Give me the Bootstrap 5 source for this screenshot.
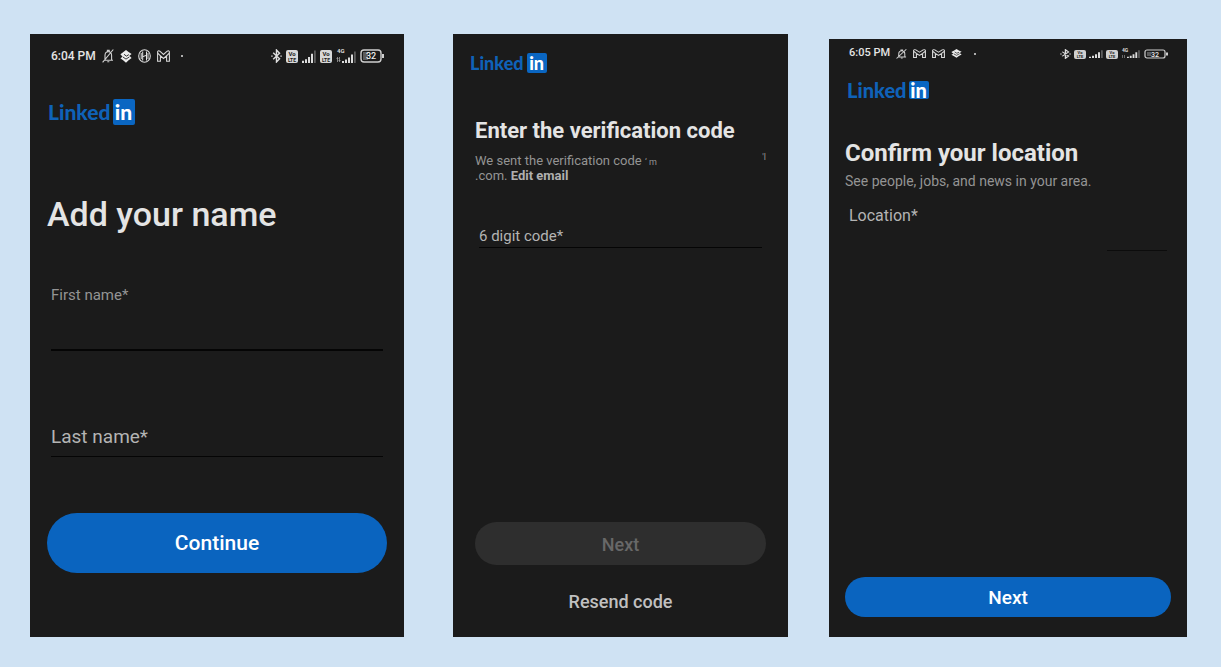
<!DOCTYPE html>
<html lang="en">
<head>
<meta charset="utf-8">
<meta name="viewport" content="width=device-width, initial-scale=1">
<title>LinkedIn sign up</title>
<link href="https://cdn.jsdelivr.net/npm/bootstrap@5.3.0/dist/css/bootstrap.min.css" rel="stylesheet">
<style>
body{background:#cfe2f3;font-family:Roboto,"Liberation Sans",sans-serif;color:#e4e4e4}
.board{min-height:100vh;padding:34px 34px 30px 30px;grid-template-columns:374fr 49px 335fr 41px 358fr}
.phone{background:#1b1b1b;min-width:0}
.phone-name{grid-column:1;padding:12px 17px 64px}
.phone-code{grid-column:3;padding:19px 22px 20px}
.phone-place{grid-column:5;padding:4px 16px 20px;margin-top:5px}
.status{height:20px;font-size:12px;font-weight:500;padding:0 2px 0 4px}
.status svg{flex:none;display:block}
.status-small{font-size:11px;height:21px}
.icons-left{gap:6px}
.icons-right{gap:4px}
.status-small .icons-right{gap:3px}
.logo{color:#0f62b8;font-family:Lato,"Open Sans",sans-serif;font-weight:900;gap:2px}
.logo-in{background:#0a66c2;color:#fff;border-radius:2px;text-align:center}
.logo-lg{font-size:21px;line-height:26px;margin:33px 0 0 1px}
.logo-lg .logo-in{width:22px}
.logo-md{font-size:18px;line-height:20px;margin-left:-5px;gap:3px}
.logo-md .logo-in{width:20px}
.logo-sm{font-size:20px;line-height:18px;margin:17px 0 0 2px}
.logo-sm .logo-in{width:20px}
h1,h2{margin:0}
h1{font-size:34px;line-height:44px;font-weight:500;margin-top:67px}
h2{font-size:22px;line-height:28px;font-weight:700}
.code-title{margin-top:44px}
.place-title{font-size:24px;margin-top:40px}
.field{padding:0 4px}
.line-input{display:block;width:100%;background:transparent;border:0;border-bottom:1px solid #050505;border-radius:0;padding:0;color:#b4b4b4;outline:0}
.line-input::placeholder{color:#b4b4b4;opacity:1}
.muted{color:#949494}
.pill{border:0;border-radius:50rem;width:100%;font-weight:500;color:#fff;padding:2px 0 0}
.pill-blue{background:#0a64bf}
.pill-off{background:#2e2e2e;color:#686868}
.pill-lg{height:60px;font-size:21px}
.pill-md{height:43px;font-size:18px}
.pill-sm{height:40px;font-size:19px}
.first-label{font-size:15px;line-height:20px;margin-top:49px}
.first-input{height:46px;border-bottom-width:2px}
.last-input{height:41px;margin-top:65px;font-size:19px}
.note{font-size:13px;line-height:15px;margin-top:8px}
.note a{color:#b0b0b0;font-weight:700;text-decoration:none}
.trace{font-size:9px;line-height:9px}
.code-input{height:24px;margin-top:41px;font-size:15px}
.resend{background:none;border:0;color:#c0c0c0;font-size:18px;line-height:30px;font-weight:500;margin-top:22px;padding:0}
.place-note{font-size:14px;line-height:16px;margin-top:6px}
.place-label{font-size:16px;line-height:20px;margin-top:17px;color:#b4b4b4}
.place-input{height:25px;border:0;background:linear-gradient(#0c0c0c,#0c0c0c) right bottom/60px 1px no-repeat}
</style>
</head>
<body>
<svg width="0" height="0" class="position-absolute" aria-hidden="true">
  <symbol id="bell" viewBox="0 0 12 14" preserveAspectRatio="none"><path d="M2 11.2h9M3 11V6.5C3 4 4.3 2.7 6.3 2.7S9.6 4 9.6 6.5V11M5.4 2.5V1.4h1.8v1.1M5.3 12.8h2M11.3.5.6 13.3" fill="none" stroke="#d0d0d0" stroke-width="1.1"/></symbol>
  <symbol id="stack" viewBox="0 0 12 14" preserveAspectRatio="none"><path d="M6 0 8.600 2.200 11.600 4.400 9.400 6.200 11.600 8.600 8.600 11 6 13.800 3.400 11.400.4 8.800 2.600 7.300.4 4.600 3.400 2.200z" fill="#ececec"/><path d="M4 4.600 6.400 6.600 8.800 5M3 7.600 6 9.800 9.400 7.400" fill="none" stroke="#1b1b1b" stroke-width=".9"/></symbol>
  <symbol id="hring" viewBox="0 0 13 14" preserveAspectRatio="none"><ellipse cx="6.5" cy="7" rx="5.8" ry="6.3" fill="none" stroke="#d8d8d8" stroke-width="1.1"/><path d="M4.7 2.5v9M8.5 2.5v9M4.7 7.7 8.5 6.3M3.2 4v6M10 4v6" fill="none" stroke="#e4e4e4" stroke-width="1"/></symbol>
  <symbol id="gmail" viewBox="0 0 13 12" preserveAspectRatio="none"><path d="M.6 11.3V1.8Q1.4.1 2.8 1.2L6.5 4.4 10.2 1.2Q11.6.1 12.4 1.8V11.3H9.6V5.8L6.5 8.5 3.4 5.8V11.3zM3.4 5.8.8 3.2M9.6 5.8 12.2 3.2" fill="none" stroke="#d8d8d8" stroke-width="1.1"/></symbol>
  <symbol id="bt" viewBox="0 0 10 14" preserveAspectRatio="none"><path d="M2 3.8 7.8 9.8 5 13V1L7.8 4.2 2 10.2" fill="none" stroke="#dedede" stroke-width="1.3"/><path d="M.2 6.4h1.3v1.3H.2zM8.5 6.4h1.3v1.3H8.5z" fill="#dedede"/></symbol>
  <symbol id="bars" viewBox="0 0 14 12" preserveAspectRatio="none"><path d="M0 10h2v2H0zM3 8.5h2V12H3zM6 6.5h2V12H6zM9 3.5h2V12H9z" fill="#dcdcdc"/><path d="M12 .5h1.8V12H12z" fill="#5c5c5c"/></symbol>
</svg>

<main class="board d-grid">

  <section class="phone phone-name d-flex flex-column">
    <div class="status d-flex align-items-center justify-content-between">
      <div class="icons-left d-flex align-items-center">
        <span>6:04 PM</span>
        <svg width="12" height="14"><use href="#bell"/></svg>
        <svg width="12" height="13"><use href="#stack"/></svg>
        <svg width="13" height="14"><use href="#hring"/></svg>
        <svg width="13" height="12"><use href="#gmail"/></svg>
        <svg width="12" height="4"><circle cx="6" cy="2" r="1" fill="#e0e0e0"/></svg>
      </div>
      <div class="icons-right d-flex align-items-center">
        <svg width="11" height="14"><use href="#bt"/></svg>
        <svg width="12" height="14"><rect y="1" width="12" height="13" rx="2" fill="#d8d8d8"/><text x="6" y="7" font-size="6" font-weight="700" text-anchor="middle" fill="#1b1b1b">Vo</text><text x="6" y="13" font-size="5" font-weight="700" text-anchor="middle" fill="#1b1b1b">LTE</text></svg>
        <svg width="14" height="13"><use href="#bars"/></svg>
        <svg width="12" height="14"><rect y="1" width="12" height="13" rx="2" fill="#d8d8d8"/><text x="6" y="7" font-size="6" font-weight="700" text-anchor="middle" fill="#1b1b1b">Vo</text><text x="6" y="13" font-size="5" font-weight="700" text-anchor="middle" fill="#1b1b1b">LTE</text></svg>
        <svg width="20" height="16"><text x="1" y="5" font-size="6" font-weight="700" fill="#dcdcdc">4G</text><path d="M1.5 9v5M3.5 9v5M.5 10.5h2M2.5 12.5h2" stroke="#a0a0a0" stroke-width=".8"/><use href="#bars" x="6" y="3" width="14" height="12"/></svg>
        <svg width="25" height="14"><rect x="1" y="1" width="20" height="12" rx="3" fill="none" stroke="#cfcfcf" stroke-width="1.4"/><rect x="3" y="3" width="5" height="8" fill="#5c5c5c"/><path d="M22 5h2v4h-2z" fill="#cfcfcf"/><text x="11" y="10" font-size="9" font-weight="500" text-anchor="middle" fill="#ececec">32</text></svg>
      </div>
    </div>
    <div class="logo logo-lg d-flex"><span>Linked</span><span class="logo-in">in</span></div>
    <h1>Add your name</h1>
    <div class="field d-flex flex-column">
      <label for="first" class="first-label muted">First name*</label>
      <input id="first" type="text" class="line-input first-input">
      <input id="last" type="text" class="line-input last-input" placeholder="Last name*" aria-label="Last name">
    </div>
    <button type="button" class="pill pill-blue pill-lg mt-auto">Continue</button>
  </section>

  <section class="phone phone-code d-flex flex-column">
    <div class="logo logo-md d-flex"><span>Linked</span><span class="logo-in">in</span></div>
    <h2 class="code-title">Enter the verification code</h2>
    <div class="note muted">
      <div class="d-flex justify-content-between"><span>We sent the verification code <span class="trace">‘ m</span></span><span class="trace">'l</span></div>
      <div>.com. <a href="#">Edit email</a></div>
    </div>
    <div class="field">
      <input type="text" class="line-input code-input" placeholder="6 digit code*" aria-label="6 digit code">
    </div>
    <button type="button" class="pill pill-off pill-md mt-auto" disabled>Next</button>
    <button type="button" class="resend">Resend code</button>
  </section>

  <section class="phone phone-place d-flex flex-column">
    <div class="status status-small d-flex align-items-center justify-content-between">
      <div class="icons-left d-flex align-items-center">
        <span>6:05 PM</span>
        <svg width="11" height="10"><use href="#bell"/></svg>
        <svg width="13" height="9"><use href="#gmail"/></svg>
        <svg width="13" height="9"><use href="#gmail"/></svg>
        <svg width="11" height="9"><use href="#stack"/></svg>
        <svg width="14" height="4"><circle cx="7" cy="2" r="1" fill="#e0e0e0"/></svg>
      </div>
      <div class="icons-right d-flex align-items-center">
        <svg width="11" height="10"><use href="#bt"/></svg>
        <svg width="12" height="10"><rect y="1" width="12" height="9" rx="2" fill="#d0d0d0"/><text x="6" y="5" font-size="4" font-weight="700" text-anchor="middle" fill="#1b1b1b">Vo</text><text x="6" y="9" font-size="4" font-weight="700" text-anchor="middle" fill="#1b1b1b">LTE</text></svg>
        <svg width="14" height="8"><use href="#bars"/></svg>
        <svg width="12" height="10"><rect y="1" width="12" height="9" rx="2" fill="#d0d0d0"/><text x="6" y="5" font-size="4" font-weight="700" text-anchor="middle" fill="#1b1b1b">Vo</text><text x="6" y="9" font-size="4" font-weight="700" text-anchor="middle" fill="#1b1b1b">LTE</text></svg>
        <svg width="20" height="12"><text x="1" y="4" font-size="5" font-weight="700" fill="#dcdcdc">4G</text><path d="M1.5 7v3M3.5 7v3" stroke="#808080" stroke-width=".8"/><use href="#bars" x="6" y="2" width="13" height="8"/></svg>
        <svg width="25" height="10"><rect x="1" y="1" width="20" height="8" rx="2" fill="none" stroke="#cfcfcf" stroke-width="1.2"/><rect x="3" y="3" width="4" height="4" fill="#5c5c5c"/><path d="M22 3.5h2v3h-2z" fill="#cfcfcf"/><text x="11" y="8" font-size="7" font-weight="500" text-anchor="middle" fill="#ececec">32</text></svg>
      </div>
    </div>
    <div class="logo logo-sm d-flex"><span>Linked</span><span class="logo-in">in</span></div>
    <h2 class="place-title">Confirm your location</h2>
    <div class="place-note muted">See people, jobs, and news in your area.</div>
    <div class="field d-flex flex-column">
      <label for="place" class="place-label">Location*</label>
      <input id="place" type="text" class="line-input place-input">
    </div>
    <button type="button" class="pill pill-blue pill-sm mt-auto">Next</button>
  </section>

</main>
<script src="https://cdn.jsdelivr.net/npm/bootstrap@5.3.0/dist/js/bootstrap.bundle.min.js"></script>
</body>
</html>
